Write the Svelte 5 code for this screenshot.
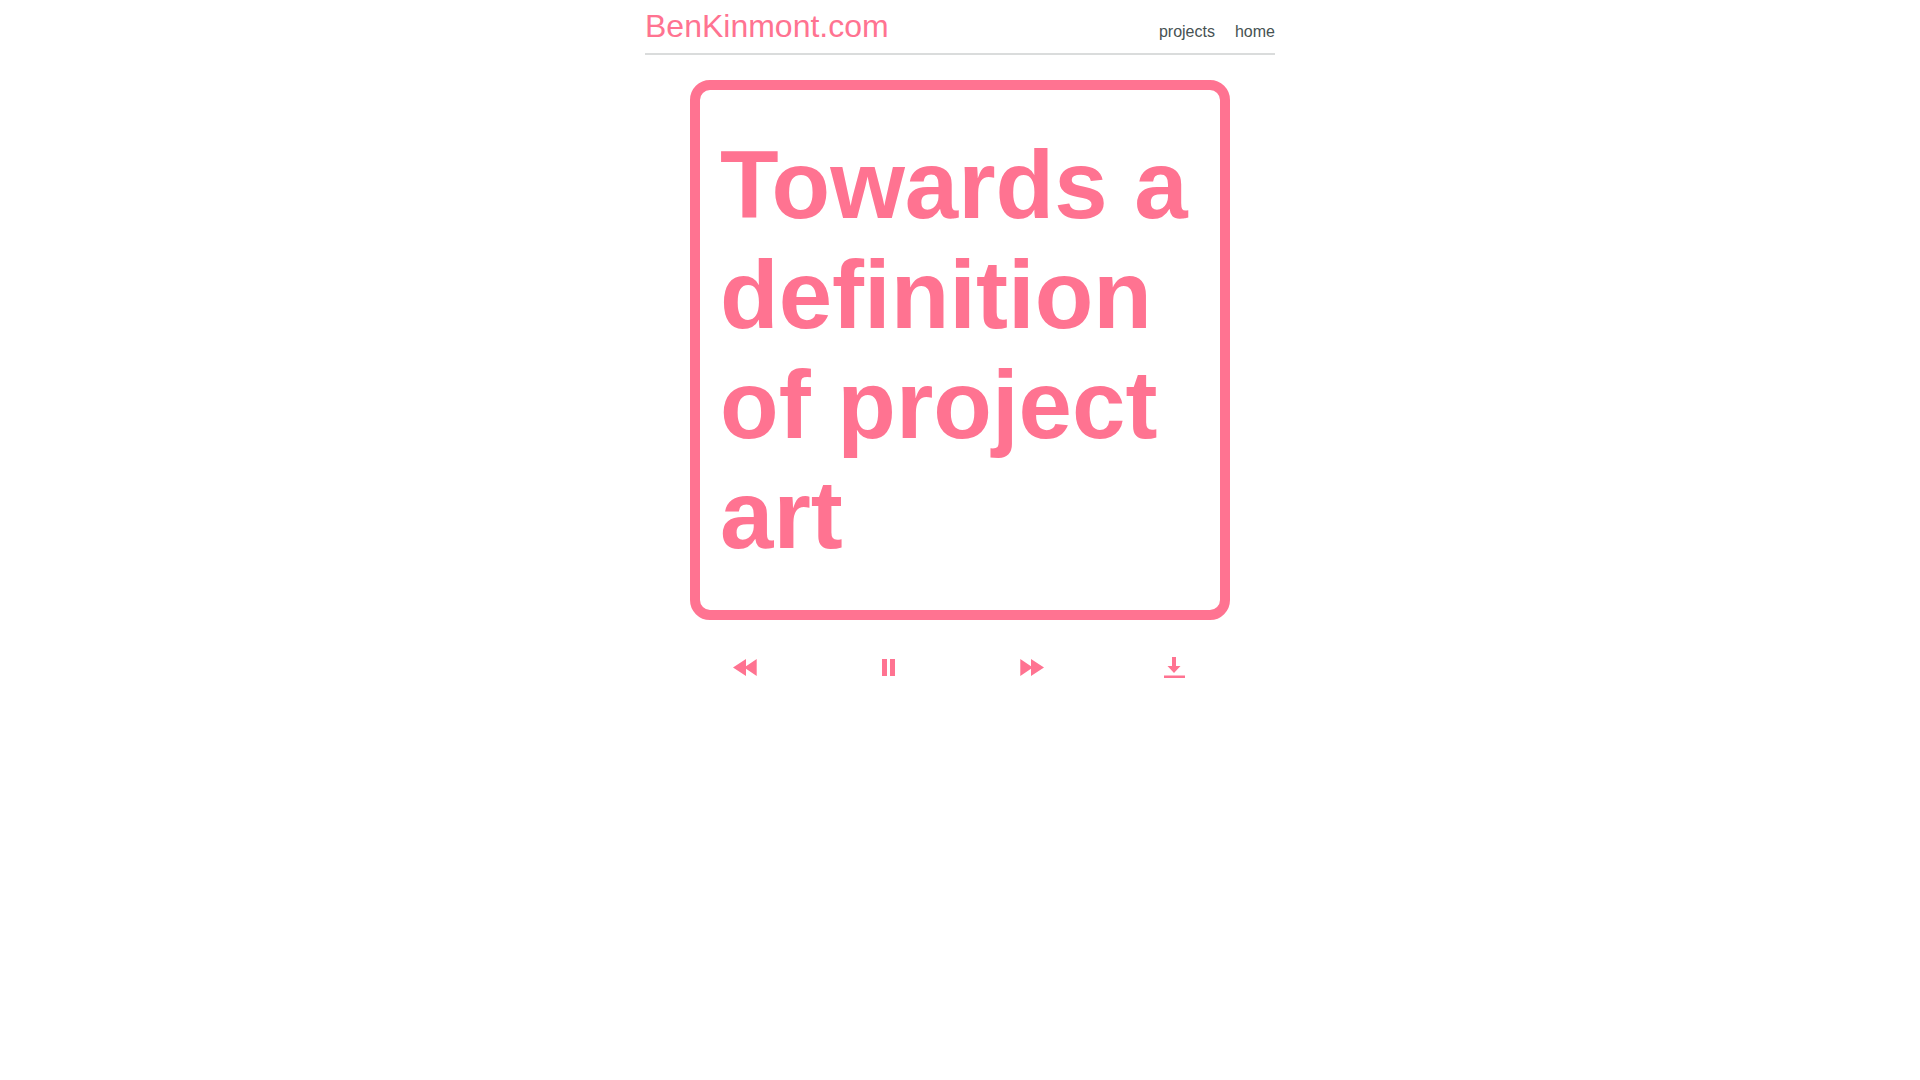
<script>
  const nav = [
    { label: 'projects', href: '#projects' },
    { label: 'home', href: '#home' }
  ];
  const controls = [
    { label: 'Previous', path: 'M3 15.5 16 7v7.300L26.700 7v17L16 16.700V24z' },
    { label: 'Pause', path: 'M9 7h5v17H9zM17 7h5v17h-5z' },
    { label: 'Next', path: 'M27 15.500 14 7v7.300L3.300 7v17L14 16.700V24z' },
    { label: 'Download', path: 'M12 5h4v9h4.500L14 21l-6.500-7H12zM4 23.500h21V26H4z' }
  ];
</script>

<div class="page">
  <header>
    <a class="brand" href="#home">BenKinmont.com</a>
    <nav>
      {#each nav as item}
        <a href={item.href}>{item.label}</a>
      {/each}
    </nav>
  </header>
  <main>
    <section class="card">
      <h1>Towards a definition of project art</h1>
    </section>
    <div class="controls">
      {#each controls as control}
        <button type="button" aria-label={control.label}>
          <svg viewBox="0 0 30 30" aria-hidden="true"><path d={control.path} /></svg>
        </button>
      {/each}
    </div>
  </main>
</div>

<style>
  :global(body) {
    background: #fff;
  }
  .page {
    max-width: 630px;
    margin: 0 auto;
    font-family: 'Liberation Sans', Arial, sans-serif;
    color: #ff7391;
  }
  header {
    display: flex;
    justify-content: space-between;
    align-items: baseline;
    padding: 8px 0;
    border-bottom: 2px solid #dadcdc;
  }
  a {
    color: inherit;
    text-decoration: none;
  }
  .brand {
    font-size: 32px;
    line-height: 37px;
  }
  nav {
    display: flex;
    gap: 20px;
    font-size: 16px;
    color: #475252;
  }
  main {
    max-width: 540px;
    margin: 25px auto 0;
  }
  .card {
    box-sizing: border-box;
    display: flex;
    align-items: center;
    aspect-ratio: 1;
    padding: 20px;
    border: 10px solid;
    border-radius: 20px;
  }
  h1 {
    margin: 0;
    font-size: 96px;
    line-height: 110px;
  }
  .controls {
    display: flex;
    justify-content: space-between;
    padding: 32px 40px;
  }
  button {
    width: 30px;
    height: 30px;
    padding: 0;
    border: 0;
    background: none;
    color: inherit;
    cursor: pointer;
  }
  svg {
    display: block;
    width: 30px;
    height: 30px;
    fill: currentColor;
  }
</style>
